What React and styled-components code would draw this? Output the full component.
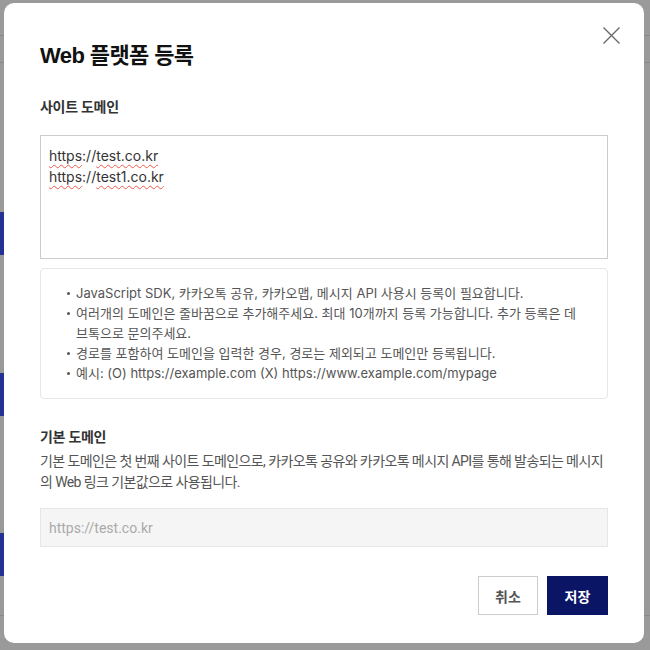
import React from 'react';
import styled, { createGlobalStyle } from 'styled-components';

const GlobalStyle = createGlobalStyle`
  html, body {
    margin: 0;
    padding: 0;
    background: #9a9a9a;
    font-family: 'Inter', 'Noto Sans CJK KR', sans-serif;
  }
  * { box-sizing: border-box; }
`;

// 모달 뒤에 깔린 페이지 (딤 처리된 상태)
const BehindPage = styled.div`
  width: 650px;
  height: 650px;
  display: flex;
  flex-direction: column;
  overflow: hidden;
`;

const BehindLine = styled.div`
  height: 1px;
  width: 100%;
  background: #8a8a8a;
  margin-top: ${(p) => p.gap}px;
`;

const BehindButton = styled.div`
  width: 60px;
  height: 43px;
  background: #253293;
  margin-top: ${(p) => p.gap}px;
`;

// 모달
const Modal = styled.div`
  position: fixed;
  top: 3px;
  left: 4px;
  width: 640px;
  height: 640px;
  background: #fff;
  border-radius: 10px;
  padding: 38px 36px 28px 36px;
  display: flex;
  flex-direction: column;
`;

const CloseButton = styled.button`
  position: absolute;
  top: 19px;
  right: 19px;
  width: 27px;
  height: 27px;
  padding: 0;
  border: 0;
  background: transparent;
  display: flex;
  align-items: center;
  justify-content: center;
  cursor: pointer;
`;

const Title = styled.h2`
  margin: 0;
  font-family: 'Liberation Sans', 'Noto Sans CJK KR', sans-serif;
  font-size: 22px;
  line-height: 30px;
  font-weight: 700;
  color: #111;
  letter-spacing: -0.6px;
`;

const Label = styled.div`
  font-size: 14px;
  line-height: 20px;
  font-weight: 600;
  color: #333;
  letter-spacing: -0.3px;
  margin-top: ${(p) => p.gap}px;
`;

const DomainBox = styled.div`
  margin-top: 18px;
  height: 124px;
  border: 1px solid #cccccc;
  padding: 9px 8px;
  font-size: 14px;
  line-height: 21px;
  color: #333;
`;

const Misspelled = styled.span`
  text-decoration: underline wavy #ee5a4e;
  text-decoration-thickness: 1px;
  text-underline-offset: 3px;
`;

const InfoBox = styled.div`
  margin-top: 9px;
  border: 1px solid #e6e6e6;
  border-radius: 4px;
  padding: 14px 22px 15px 35px;
`;

const InfoList = styled.ul`
  margin: 0;
  padding: 0;
  list-style: none;
`;

const InfoItem = styled.li`
  position: relative;
  font-size: 13px;
  line-height: 20px;
  color: #555;
  &::before {
    content: '';
    position: absolute;
    left: -9px;
    top: 9px;
    width: 3px;
    height: 3px;
    border-radius: 50%;
    background: #555;
  }
`;

const Description = styled.p`
  margin: 4px 0 0;
  font-family: 'Roboto', 'Noto Sans CJK KR', sans-serif;
  font-size: 14px;
  line-height: 21px;
  letter-spacing: -0.6px;
  color: #555;
`;

const DisabledInput = styled.input`
  margin-top: 15px;
  height: 39px;
  width: 100%;
  border: 1px solid #e6e6e6;
  background: #f5f5f5;
  padding: 0 8px;
  font-family: 'Roboto', 'Noto Sans CJK KR', sans-serif;
  font-size: 14px;
  color: #aaa;
  &::placeholder { color: #aaa; }
`;

const Footer = styled.div`
  margin-top: auto;
  display: flex;
  justify-content: flex-end;
  gap: 9px;
`;

const Button = styled.button`
  height: 39px;
  width: ${(p) => (p.primary ? 61 : 60)}px;
  padding: 0;
  font-family: 'Noto Sans CJK KR', sans-serif;
  font-size: 14px;
  font-weight: 700;
  border: 1px solid ${(p) => (p.primary ? '#0b1566' : '#cccccc')};
  background: ${(p) => (p.primary ? '#0b1566' : '#fff')};
  color: ${(p) => (p.primary ? '#fff' : '#555')};
  cursor: pointer;
`;

const infoItems = [
  'JavaScript SDK, 카카오톡 공유, 카카오맵, 메시지 API 사용시 등록이 필요합니다.',
  '여러개의 도메인은 줄바꿈으로 추가해주세요. 최대 10개까지 등록 가능합니다. 추가 등록은 데브톡으로 문의주세요.',
  '경로를 포함하여 도메인을 입력한 경우, 경로는 제외되고 도메인만 등록됩니다.',
  '예시: (O) https://example.com (X) https://www.example.com/mypage',
];

const domains = ['test.co.kr', 'test1.co.kr'];

const App = () => (
  <>
    <GlobalStyle />
    <BehindPage>
      <BehindLine gap={35} />
      <BehindLine gap={26} />
      <BehindButton gap={149} />
      <BehindButton gap={118} />
      <BehindButton gap={117} />
      <BehindLine gap={39} />
    </BehindPage>
    <Modal>
      <CloseButton aria-label="닫기">
        <svg width="17" height="17" viewBox="0 0 17 17">
          <path d="M0.5 0.5 L16.5 16.5 M16.5 0.5 L0.5 16.5" stroke="#6b6b6b" strokeWidth="1.4" fill="none" />
        </svg>
      </CloseButton>
      <Title>Web 플랫폼 등록</Title>
      <Label gap={26}>사이트 도메인</Label>
      <DomainBox>
        {domains.map((d) => (
          <div key={d}>
            <Misspelled>https</Misspelled>://<Misspelled>{d}</Misspelled>
          </div>
        ))}
      </DomainBox>
      <InfoBox>
        <InfoList>
          {infoItems.map((t) => (
            <InfoItem key={t}>{t}</InfoItem>
          ))}
        </InfoList>
      </InfoBox>
      <Label gap={28}>기본 도메인</Label>
      <Description>
        기본 도메인은 첫 번째 사이트 도메인으로, 카카오톡 공유와 카카오톡 메시지 API를 통해 발송되는 메시지의 Web 링크 기본값으로 사용됩니다.
      </Description>
      <DisabledInput disabled placeholder="https://test.co.kr" />
      <Footer>
        <Button>취소</Button>
        <Button primary>저장</Button>
      </Footer>
    </Modal>
  </>
);

export default App;
